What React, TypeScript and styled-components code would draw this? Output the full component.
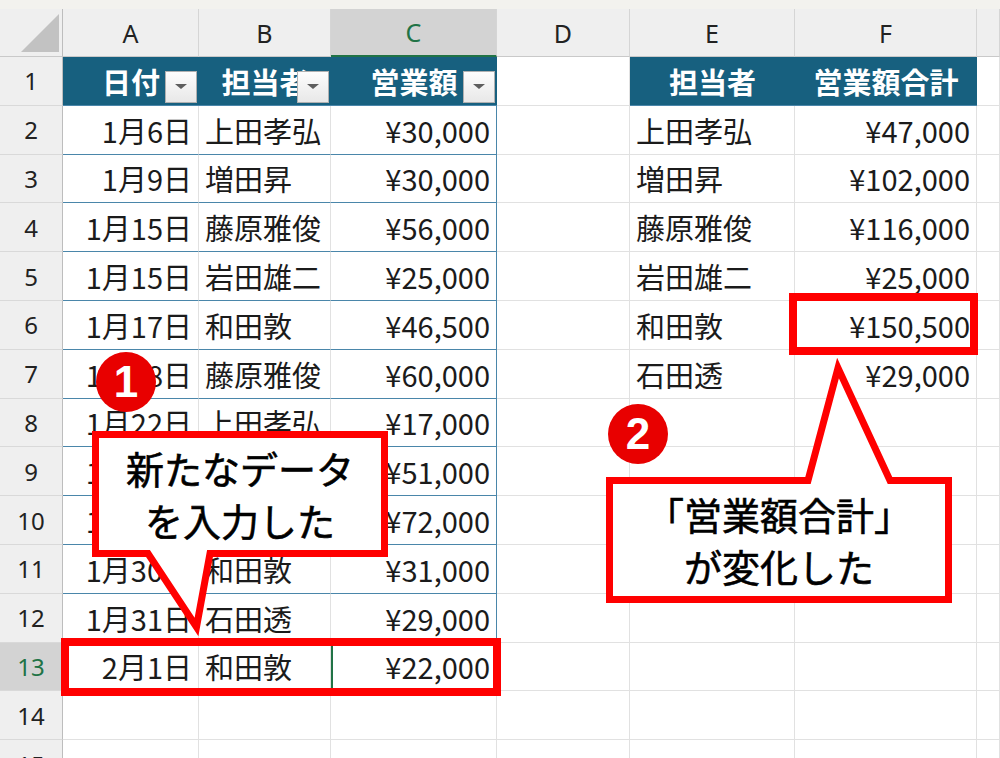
import React from 'react';
import styled, { createGlobalStyle, css } from 'styled-components';

const TEAL = '#17607f';
const TEAL_LINE = '#4a86aa';
const GRID = '#e1e1e1';
const HEAD_BG = '#efefef';
const HEAD_LINE = '#c9c9c9';
const SEL_BG = '#d3d3d3';
const GREEN = '#217346';
const RED = '#ff0000';
const BADGE_RED = '#e80000';

const COLS = '63px 136px 132px 166px 133px 165px 182px 23px';
const ROW_H = 48.8;

const GlobalStyle = createGlobalStyle`
  html, body { margin: 0; padding: 0; background: #fff; }
  body { font-family: "Noto Sans CJK JP", "Noto Sans", sans-serif; overflow: hidden; }
`;

const Sheet = styled.div`
  position: relative;
  width: 1000px;
  height: 758px;
  overflow: hidden;
  background: #fff;
  display: flex;
  flex-direction: column;
`;

const TopStrip = styled.div`
  flex: none;
  height: 9px;
  background: #f3f2ee;
`;

const Row = styled.div<{ $h: number }>`
  flex: none;
  display: grid;
  grid-template-columns: ${COLS};
  height: ${(p) => p.$h}px;
`;

const Corner = styled.div`
  position: relative;
  box-sizing: border-box;
  background: ${HEAD_BG};
  border-right: 1px solid #bdbdbd;
  border-bottom: 1px solid ${HEAD_LINE};
  &::after {
    content: '';
    position: absolute;
    right: 3px;
    bottom: 4px;
    width: 38px;
    height: 38px;
    background: #c2c2c2;
    clip-path: polygon(100% 0, 100% 100%, 0 100%);
  }
`;

const ColHead = styled.div<{ $selected?: boolean }>`
  box-sizing: border-box;
  display: flex;
  align-items: center;
  justify-content: center;
  background: ${(p) => (p.$selected ? SEL_BG : HEAD_BG)};
  border-right: 1px solid #d5d5d5;
  border-bottom: ${(p) => (p.$selected ? `2px solid ${GREEN}` : `1px solid ${HEAD_LINE}`)};
  font-family: "Noto Sans", "Liberation Sans", sans-serif;
  font-size: 25px;
  color: ${(p) => (p.$selected ? GREEN : '#222')};
`;

const RowHead = styled.div<{ $selected?: boolean }>`
  box-sizing: border-box;
  display: flex;
  align-items: center;
  justify-content: center;
  background: ${(p) => (p.$selected ? SEL_BG : HEAD_BG)};
  border-right: 1px solid #bdbdbd;
  border-bottom: 1px solid #d9d9d9;
  font-family: "Noto Sans", "Liberation Sans", sans-serif;
  font-size: 24px;
  color: ${(p) => (p.$selected ? GREEN : '#222')};
`;

type Align = 'left' | 'right';

const Cell = styled.div<{ $align?: Align; $tableRow?: boolean; $tableEdge?: boolean; $active?: boolean }>`
  box-sizing: border-box;
  display: flex;
  align-items: center;
  justify-content: ${(p) => (p.$align === 'right' ? 'flex-end' : 'flex-start')};
  padding: 0 6px;
  background: #fff;
  border-right: 1px solid ${(p) => (p.$tableEdge ? TEAL_LINE : GRID)};
  border-bottom: 1px solid ${(p) => (p.$tableRow ? TEAL_LINE : GRID)};
  font-family: "Noto Sans CJK JP", sans-serif;
  font-size: 29px;
  color: #1b1b1b;
  white-space: nowrap;
  overflow: hidden;
  ${(p) =>
    p.$active &&
    css`
      box-shadow: inset 2px 0 0 ${GREEN};
    `}
`;

const HeadCell = styled.div`
  position: relative;
  box-sizing: border-box;
  display: flex;
  align-items: center;
  justify-content: center;
  background: ${TEAL};
  border-bottom: 1px solid ${TEAL_LINE};
  font-family: "Noto Sans CJK JP", sans-serif;
  font-size: 29px;
  font-weight: 700;
  color: #fff;
  white-space: nowrap;
  overflow: hidden;
`;

const FilterButton = styled.span`
  position: absolute;
  right: 2px;
  bottom: 2px;
  width: 32px;
  height: 32px;
  box-sizing: border-box;
  background: linear-gradient(#fdfdfd, #e8e8e8);
  border: 1px solid #b0b0b0;
  display: flex;
  align-items: center;
  justify-content: center;
  &::after {
    content: '';
    border-left: 6px solid transparent;
    border-right: 6px solid transparent;
    border-top: 5px solid #5e5e5e;
  }
`;

const Highlight = styled.div<{ $x: number; $y: number; $w: number; $h: number }>`
  position: absolute;
  left: ${(p) => p.$x}px;
  top: ${(p) => p.$y}px;
  width: ${(p) => p.$w}px;
  height: ${(p) => p.$h}px;
  box-sizing: border-box;
  border: 8px solid ${RED};
`;

const Badge = styled.div<{ $x: number; $y: number }>`
  position: absolute;
  left: ${(p) => p.$x}px;
  top: ${(p) => p.$y}px;
  width: 60px;
  height: 60px;
  border-radius: 50%;
  background: ${BADGE_RED};
  color: #fff;
  display: flex;
  align-items: center;
  justify-content: center;
  font-family: "Liberation Sans", Arial, sans-serif;
  font-weight: 700;
  font-size: 44px;
  line-height: 1;
`;

const Callout = styled.div<{ $x: number; $y: number; $w: number; $h: number; $tail: 'top' | 'bottom' }>`
  position: absolute;
  left: ${(p) => p.$x}px;
  top: ${(p) => p.$y}px;
  width: ${(p) => p.$w}px;
  height: ${(p) => p.$h}px;
  display: flex;
  flex-direction: column;
  justify-content: ${(p) => (p.$tail === 'bottom' ? 'flex-start' : 'flex-end')};
`;

const CalloutShape = styled.svg`
  position: absolute;
  left: 0;
  top: 0;
  overflow: visible;
`;

const CalloutText = styled.div`
  position: relative;
  height: 126px;
  display: flex;
  flex-direction: column;
  align-items: center;
  justify-content: center;
  font-family: "Noto Sans CJK JP", sans-serif;
  font-size: 38px;
  font-weight: 400;
  line-height: 52px;
  color: #000;
  white-space: nowrap;
  -webkit-text-stroke: 0.6px #000;
`;

const data: [string, string, string][] = [
  ['1月6日', '上田孝弘', '¥30,000'],
  ['1月9日', '増田昇', '¥30,000'],
  ['1月15日', '藤原雅俊', '¥56,000'],
  ['1月15日', '岩田雄二', '¥25,000'],
  ['1月17日', '和田敦', '¥46,500'],
  ['1月18日', '藤原雅俊', '¥60,000'],
  ['1月22日', '上田孝弘', '¥17,000'],
  ['1月24日', '和田敦', '¥51,000'],
  ['1月28日', '増田昇', '¥72,000'],
  ['1月30日', '和田敦', '¥31,000'],
  ['1月31日', '石田透', '¥29,000'],
];

const summary: [string, string][] = [
  ['上田孝弘', '¥47,000'],
  ['増田昇', '¥102,000'],
  ['藤原雅俊', '¥116,000'],
  ['岩田雄二', '¥25,000'],
  ['和田敦', '¥150,500'],
  ['石田透', '¥29,000'],
];

const colLetters = ['A', 'B', 'C', 'D', 'E', 'F', ''];

export default function App() {
  return (
    <>
      <GlobalStyle />
      <Sheet>
        <TopStrip />
        <Row $h={48}>
          <Corner />
          {colLetters.map((c, i) => (
            <ColHead key={i} $selected={c === 'C'}>
              {c}
            </ColHead>
          ))}
        </Row>

        <Row $h={ROW_H}>
          <RowHead>1</RowHead>
          <HeadCell>
            日付
            <FilterButton />
          </HeadCell>
          <HeadCell>
            担当者
            <FilterButton />
          </HeadCell>
          <HeadCell>
            営業額
            <FilterButton />
          </HeadCell>
          <Cell />
          <HeadCell>担当者</HeadCell>
          <HeadCell>営業額合計</HeadCell>
          <Cell />
        </Row>

        {data.map((r, i) => {
          const s = summary[i];
          return (
            <Row key={i} $h={ROW_H}>
              <RowHead>{i + 2}</RowHead>
              <Cell $align="right" $tableRow>
                {r[0]}
              </Cell>
              <Cell $tableRow>{r[1]}</Cell>
              <Cell $align="right" $tableRow $tableEdge>
                {r[2]}
              </Cell>
              <Cell />
              <Cell>{s ? s[0] : ''}</Cell>
              <Cell $align="right">{s ? s[1] : ''}</Cell>
              <Cell />
            </Row>
          );
        })}

        <Row $h={ROW_H}>
          <RowHead $selected>13</RowHead>
          <Cell $align="right">2月1日</Cell>
          <Cell>和田敦</Cell>
          <Cell $align="right" $active>
            ¥22,000
          </Cell>
          <Cell />
          <Cell />
          <Cell />
          <Cell />
        </Row>

        {[14, 15].map((n) => (
          <Row key={n} $h={ROW_H}>
            <RowHead>{n}</RowHead>
            <Cell />
            <Cell />
            <Cell />
            <Cell />
            <Cell />
            <Cell />
            <Cell />
          </Row>
        ))}

        <Highlight $x={61} $y={638} $w={440} $h={58} />
        <Highlight $x={789} $y={293} $w={189} $h={62} />

        <Callout $x={92} $y={431} $w={296} $h={206} $tail="bottom">
          <CalloutShape width={296} height={206} viewBox="0 0 296 206">
            <path
              d="M3.5 3.5 H292.5 V122.5 H118 L104.5 196 L56 122.5 H3.5 Z"
              fill="#fff"
              stroke={RED}
              strokeWidth={7}
              strokeLinejoin="miter"
              strokeMiterlimit={10}
            />
          </CalloutShape>
          <CalloutText>
            <span>新たなデータ</span>
            <span>を入力した</span>
          </CalloutText>
        </Callout>

        <Callout $x={606} $y={358} $w={346} $h={245} $tail="top">
          <CalloutShape width={346} height={245} viewBox="0 0 346 245">
            <path
              d="M3.5 122.5 H202 L232 10 L284 122.5 H342.5 V241.5 H3.5 Z"
              fill="#fff"
              stroke={RED}
              strokeWidth={7}
              strokeLinejoin="miter"
              strokeMiterlimit={10}
            />
          </CalloutShape>
          <CalloutText>
            <span>「営業額合計」</span>
            <span>が変化した</span>
          </CalloutText>
        </Callout>

        <Badge $x={96} $y={352}>1</Badge>
        <Badge $x={608} $y={404}>2</Badge>
      </Sheet>
    </>
  );
}
